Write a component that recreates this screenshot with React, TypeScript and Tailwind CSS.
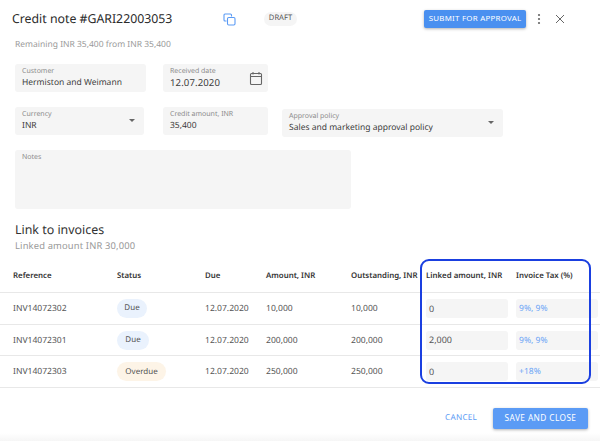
import React from "react";

function Field({ label, value, className, big, caret, calendar }: { label: string; value: string; className: string; big?: boolean; caret?: boolean; calendar?: boolean }) {
  return (
    <div className={`relative h-[28px] rounded-[3px] bg-[#f5f5f5] pl-[7px] pt-[3px] ${className}`}>
      <div className="text-[7px] leading-[9px] text-[#8b8b8b]">{label}</div>
      <div className={`${big ? "text-[9.6px] tracking-[0.1px]" : "text-[8.5px]"} leading-[13px] text-[#3c3c3c]`}>{value}</div>
      {caret && <div className="absolute right-[9px] top-[12px] h-0 w-0 border-x-[3px] border-t-[3px] border-x-transparent border-t-[#666]" />}
      {calendar && (
        <svg className="absolute right-[5px] top-[7px]" width="14" height="15" viewBox="0 0 14 15" fill="none" stroke="#666" strokeWidth="1.1">
          <rect x="1.5" y="2.5" width="11" height="11" rx="1" />
          <path d="M1.5 5.5h11M4 1v2.5M10 1v2.5" />
        </svg>
      )}
    </div>
  );
}

const rows = [
  { ref: "INV14072302", status: "Due", due: "12.07.2020", amt: "10,000", out: "10,000", linked: "0", tax: "9%, 9%", w: "w-[30px]" },
  { ref: "INV14072301", status: "Due", due: "12.07.2020", amt: "200,000", out: "200,000", linked: "2,000", tax: "9%, 9%", w: "w-[32px]" },
  { ref: "INV14072303", status: "Overdue", due: "12.07.2020", amt: "250,000", out: "250,000", linked: "0", tax: "+18%", w: "w-[49px]" },
];

const cols = "grid grid-cols-[104px_88px_61px_85px_75px_90px_1fr] items-center pl-[13px]";

export default function App() {
  return (
    <div className="relative h-[441px] w-[600px] overflow-hidden bg-white font-['Noto_Sans',sans-serif] text-[#3c3c3c] [text-rendering:geometricPrecision]">
      <div className="flex h-[38px] items-center pl-[12px]">
        <h1 className="w-[212px] whitespace-nowrap text-[12.3px] font-normal leading-[18px] text-[#2b2b2b]">Credit note #GARI22003053</h1>
        <svg className="mr-[30px] -ml-[1px] mt-[1px]" width="13" height="13" viewBox="0 0 13 13" fill="none" stroke="#5b9bf5" strokeWidth="1.1">
          <path d="M8.5 3.5V2a1 1 0 0 0-1-1H2a1 1 0 0 0-1 1v5a1 1 0 0 0 1 1h1.5" />
          <rect x="4.5" y="4.5" width="7.5" height="7.5" rx="1.2" />
        </svg>
        <span className="-ml-[2px] flex h-[14px] w-[33px] items-center justify-center rounded-full bg-[#f5f5f5] text-[7.6px] text-[#555]">DRAFT</span>
        <button className="ml-[127px] flex h-[18px] w-[102px] items-center justify-center rounded-[2px] bg-[#4a90f0] text-[7.9px] tracking-[0.25px] text-white shadow-[0_1px_3px_rgba(0,0,0,0.3)]">SUBMIT FOR APPROVAL</button>
        <svg className="ml-[10px]" width="6" height="12" viewBox="0 0 6 12" fill="#666"><circle cx="3" cy="2" r="1.1" /><circle cx="3" cy="6" r="1.1" /><circle cx="3" cy="10" r="1.1" /></svg>
        <svg className="ml-[13px]" width="10" height="10" viewBox="0 0 10 10" stroke="#666" strokeWidth="1"><path d="M1 1l8 8M9 1l-8 8" /></svg>
      </div>
      <div className="mt-[1px] pl-[15px] text-[8.5px] leading-[11px] text-[#9a9a9a]">Remaining INR 35,400 from INR 35,400</div>

      <div className="mt-[14px] flex gap-[17px] pl-[15px]">
        <Field label="Customer" value="Hermiston and Weimann" className="w-[131px]" />
        <Field label="Received date" value="12.07.2020" big calendar className="w-[105px]" />
      </div>
      <div className="mt-[15px] flex items-start pl-[15px]">
        <Field label="Currency" value="INR" caret className="w-[129px]" />
        <Field label="Credit amount, INR" value="35,400" className="ml-[19px] w-[105px]" />
        <Field label="Approval policy" value="Sales and marketing approval policy" caret className="ml-[14px] mt-[2px] w-[221px]" />
      </div>
      <div className="mt-[13px] ml-[15px] h-[59px] w-[336px] rounded-[3px] bg-[#f5f5f5] pl-[7px] pt-[3px] text-[7px] leading-[9px] text-[#8b8b8b]">Notes</div>

      <h2 className="mt-[12px] pl-[15px] text-[12.4px] font-normal leading-[18px] text-[#333]">Link to invoices</h2>
      <div className="pl-[15px] text-[9.4px] leading-[14px] tracking-[0.15px] text-[#999]">Linked amount INR 30,000</div>

      <div className={`${cols} mt-[9px] h-[31px] border-b border-[#e8e8e8] text-[7.85px] font-semibold text-[#333]`}>
        <div>Reference</div>
        <div>Status</div>
        <div>Due</div>
        <div>Amount, INR</div>
        <div className="whitespace-nowrap">Outstanding, INR</div>
        <div className="whitespace-nowrap">Linked amount, INR</div>
        <div className="whitespace-nowrap">Invoice Tax (%)</div>
      </div>
      {rows.map((r) => (
        <div key={r.ref} className={`${cols} h-[31.7px] border-b border-[#e8e8e8] text-[8.55px] text-[#555]`}>
          <div>{r.ref}</div>
          <div>
            <span className={`flex h-[19px] ${r.w} items-center justify-center rounded-full text-[8px] ${r.status === "Due" ? "bg-[#eaf2fd]" : "bg-[#fdf4e7]"}`}>{r.status}</span>
          </div>
          <div>{r.due}</div>
          <div>{r.amt}</div>
          <div>{r.out}</div>
          <div className="flex h-[19px] w-[82px] items-center rounded-[3px] bg-[#f5f5f5] pl-[3px] text-[9px]">{r.linked}</div>
          <div className="flex h-[19px] w-[82px] items-center rounded-[3px] bg-[#f5f5f5] pl-[3px] text-[#6ea6f5]">{r.tax}</div>
        </div>
      ))}

      <div className="mt-[20px] flex items-center pl-[445px]">
        <span className="w-[31px] whitespace-nowrap text-[8.2px] tracking-[0.25px] text-[#5b9bf5]">CANCEL</span>
        <button className="ml-[17px] flex h-[21px] w-[95px] items-center justify-center rounded-[2px] bg-[#5b9bf5] text-[8.3px] tracking-[0.4px] text-white shadow-[0_1px_3px_rgba(0,0,0,0.3)]">SAVE AND CLOSE</button>
      </div>

      <div className="pointer-events-none absolute left-[420px] top-[259px] h-[125px] w-[171px] rounded-[9px] border-[2px] border-[#1a3fe0]" />
      <div className="pointer-events-none absolute bottom-0 left-0 h-[8px] w-full bg-gradient-to-b from-transparent to-[#f6f6f6]" />
    </div>
  );
}
